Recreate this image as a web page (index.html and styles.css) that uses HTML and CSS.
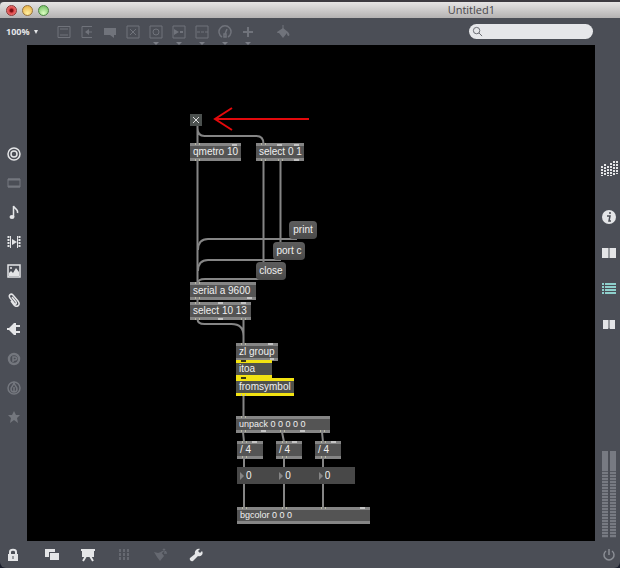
FILE: index.html
```html
<!DOCTYPE html>
<html lang="en">
<head>
<meta charset="utf-8">
<title>Untitled1</title>
<link rel="stylesheet" href="styles.css">
</head>
<body>
<div class="window">
  <header class="titlebar">
    <div class="lights">
      <button class="light close-light" aria-label="Close"></button>
      <button class="light min-light" aria-label="Minimize"></button>
      <button class="light zoom-light" aria-label="Zoom"></button>
    </div>
    <h1 class="title">Untitled1</h1>
  </header>

  <nav class="toolbar">
    <button class="zoom-level">100% <span class="caret"></span></button>
    <div class="tools">
      <button class="tool" aria-label="Object"><svg viewBox="0 0 14 14"><path d="M1 1.500h12v11H1zM3 4h8M3 10h8"/></svg></button>
      <button class="tool" aria-label="Message"><svg viewBox="0 0 14 14"><path d="M12 1.500H2v11h10M6 7h6"/><path class="solid" d="M5 7l4-3v6z"/></svg></button>
      <button class="tool" aria-label="Comment"><svg viewBox="0 0 14 14"><path class="solid" d="M1 3h12v7h-2v3l-4-3H1z"/></svg></button>
      <button class="tool" aria-label="Toggle"><svg viewBox="0 0 14 14"><path d="M1 1h12v12H1zM4 4l6 6M10 4l-6 6"/></svg></button>
      <button class="tool more" aria-label="Button"><svg viewBox="0 0 14 14"><path d="M1 1h12v12H1z"/><circle cx="7" cy="7" r="3"/></svg></button>
      <button class="tool more" aria-label="Number"><svg viewBox="0 0 14 14"><path d="M1 1h12v12H1z"/><path class="solid" d="M2 4l5 3-5 3zM8 6h3v2H8z"/></svg></button>
      <button class="tool more" aria-label="Slider"><svg viewBox="0 0 14 14"><path d="M1 1h12v12H1zM2 7h3M6 7h3M10 7h3"/></svg></button>
      <button class="tool more" aria-label="Dial"><svg viewBox="0 0 14 14"><path d="M4 12a6 6 0 1 1 6 0M7 9l2-5M6 9h2v3H6z" stroke-width="1.500"/></svg></button>
      <button class="tool more" aria-label="Add"><svg viewBox="0 0 14 14"><path d="M7 2v10M2 7h10" stroke-width="2"/></svg></button>
    </div>
    <button class="tool fill" aria-label="Fill color"><svg viewBox="0 0 14 14"><path class="solid" d="M1 7l6-4 5 4c1 1 2 3 1 4-2 0-2-2-2-3l-4 5-4-5c-1 0-2 0-2-1z"/><path d="M7 0v4"/></svg></button>
    <label class="search">
      <svg viewBox="0 0 12 12"><circle cx="5" cy="5" r="3.500"/><path d="M7.500 7.500L11 11"/></svg>
      <input type="search" aria-label="Search">
    </label>
  </nav>

  <main class="workspace">
    <aside class="rail left">
      <button class="icon" aria-label="Target"><svg viewBox="0 0 14 14"><circle cx="7" cy="7" r="6" stroke-width="1.500"/><circle cx="7" cy="7" r="3" stroke-width="1.500"/></svg></button>
      <button class="icon dim" aria-label="Object box"><svg viewBox="0 0 14 14"><path d="M1 3h12v8H1z"/><path d="M1 3.500h12M1 10.500h12" stroke-width="2"/></svg></button>
      <button class="icon" aria-label="Audio"><svg viewBox="0 0 14 14"><path d="M6.500 12V1c1 3 5 3 4 7" stroke-width="1.500"/><ellipse class="solid" cx="5" cy="12" rx="2.500" ry="2"/></svg></button>
      <button class="icon" aria-label="Video"><svg viewBox="0 0 14 14"><path d="M1.500 1v12M12.500 1v12" stroke-width="2" stroke-dasharray="2 1"/><path d="M3.500 1v12M10.500 1v12"/><path class="solid" d="M5 4l5 3-5 3z"/></svg></button>
      <button class="icon" aria-label="Images"><svg viewBox="0 0 14 14"><path d="M1 1h12v12H1z" stroke-width="1.500"/><path class="solid" d="M2 12V9l2-2 2 2 3-5 3 4v4z"/><circle class="solid" cx="4" cy="4" r="1"/></svg></button>
      <button class="icon" aria-label="Clippings"><svg viewBox="0 0 14 14"><path d="M5 4l4 5c1 2-1 3-2 1L3 5C1 2 4 0 6 2l5 6c3 4-1 7-4 4L4 8" stroke-width="1.500"/></svg></button>
      <button class="icon" aria-label="Plug-ins"><svg viewBox="0 0 14 14"><path class="solid" d="M0 6h2l5-5h2v2h4v2H9v4h4v2H9v2H7L2 8H0z"/></svg></button>
      <button class="icon dim" aria-label="Packages"><svg viewBox="0 0 14 14"><circle cx="7" cy="7" r="5" stroke-width="2.500"/><path d="M6 10V5h2c2 0 2 3 0 3H6" stroke-width="1.500"/></svg></button>
      <button class="icon dim" aria-label="Live"><svg viewBox="0 0 14 14"><circle cx="7" cy="7" r="6" stroke-width="1.500"/><path d="M7 2c-1 3-3 4-3 6 0 4 6 4 6 0 0-2-2-3-3-6zM7 6v5" stroke-width="1.500"/></svg></button>
      <button class="icon dim" aria-label="Favorites"><svg viewBox="0 0 14 14"><path class="solid" d="M7 1l2 4h4l-3 3 1 5-4-3-4 3 1-5-3-3h4z"/></svg></button>
    </aside>

    <section class="canvas" aria-label="Patcher">
      <svg class="wires" viewBox="27 45 568 496">
        <path d="M197.500 126v17M197.500 128q0 8 7 8h52q7 0 7 8M197.500 161v121M263.500 161v102M280.500 161v81"/>
        <path d="M297 239H208q-10 0-10 11M281 260H208q-10 0-10 11M264 279h-59q-7 0-7 4"/>
        <path d="M197.500 299v4M197.500 319q0 5 7 5h27q12 0 12 12M243.500 319v25M243.500 395v22"/>
        <path d="M243 432l1 10M282 432l2 10M322 432l1 10M244 458v9M284 458v9M323 458v9M244 484v24M284 484v24M323 484v24"/>
        <path class="pointer" d="M309 119H215M232 108l-17 11 17 11"/>
      </svg>

      <input class="node toggle" type="checkbox" checked aria-label="Toggle">
      <div class="node object qmetro">qmetro 10</div>
      <div class="node object select-a">select 0 1</div>
      <button class="node message print">print</button>
      <button class="node message port">port c</button>
      <button class="node message close">close</button>
      <div class="node object serial">serial a 9600</div>
      <div class="node object select-b">select 10 13</div>
      <div class="node object zl">zl group</div>
      <div class="node object signal itoa">itoa</div>
      <div class="node object signal fromsymbol">fromsymbol</div>
      <div class="node object small unpack">unpack 0 0 0 0 0</div>
      <div class="node object div-a">/ 4</div>
      <div class="node object div-b">/ 4</div>
      <div class="node object div-c">/ 4</div>
      <div class="node numbers">
        <label><span class="marker"></span><input type="text" value="0" aria-label="Red"></label>
        <label><span class="marker"></span><input type="text" value="0" aria-label="Green"></label>
        <label><span class="marker"></span><input type="text" value="0" aria-label="Blue"></label>
      </div>
      <div class="node object small bgcolor">bgcolor 0 0 0</div>

      <svg class="ports" viewBox="27 45 568 496">
        <path class="joined" d="M195 144h5M195 160h5M261 144h5M261 160h5M278 160h5M195 283h5M195 298h5M195 303h5M195 319h5M241 319h5M241 344h5M241 395h5M241 417h5M241 431h5M280 431h5M320 431h5M242 442h5M282 442h5M321 442h5M242 457h5M282 457h5M321 457h5M242 508h5M282 508h5M321 508h5"/>
        <path class="free" d="M232 145h5M277 145h5M294 145h5M294 160h5M247 298h5M218 303h5M241 303h5M218 319h5M268 344h5M270 359h4M261 431h5M300 431h5M252 442h5M292 442h5M331 442h5M360 508h5"/>
        <path class="dark" d="M241 361h5M241 378h5"/>
      </svg>
    </section>

    <aside class="rail right">
      <div class="views">
        <button class="icon large" aria-label="Snapshots"><svg viewBox="0 0 18 18"><path d="M2 6v10M5 4v12M8 6v10M11 3v13M14 1v15M17 1v13" stroke-width="2" stroke-dasharray="2 1"/></svg></button>
        <button class="icon" aria-label="Inspector"><svg viewBox="0 0 14 14"><circle class="solid" cx="7" cy="7" r="7"/><path class="cut" d="M5 6h3l-1 5h2M8 2v2" stroke-width="1.500"/></svg></button>
        <button class="icon" aria-label="Reference"><svg viewBox="0 0 14 14"><path class="solid" d="M0 2h6l1 1 1-1h6v10H8l-1-1-1 1H0z"/><path class="cut" d="M7 3v8"/></svg></button>
        <button class="icon active" aria-label="Console"><svg viewBox="0 0 14 14"><path d="M0 2h2M3 2h11M0 5h2M3 5h11M0 8h2M3 8h11M0 11h2M3 11h11" stroke-width="2"/></svg></button>
        <button class="icon" aria-label="Lessons"><svg viewBox="0 0 14 14"><path class="solid" d="M1 2h5l1 1 1-1h5v9H8l-1-1-1 1H1z"/><path class="cut" d="M7 3v8"/></svg></button>
      </div>
      <div class="meters"><span class="meter"></span><span class="meter"></span></div>
    </aside>
  </main>

  <footer class="bottombar">
    <button class="icon lock" aria-label="Lock"><svg viewBox="0 0 14 14"><path class="solid" d="M2 6h10v7H2z"/><path d="M4 7V4c0-3 6-3 6 0v3" stroke-width="2"/><path class="cut" d="M7 8v3"/></svg></button>
    <div class="actions">
      <button class="icon" aria-label="New view"><svg viewBox="0 0 14 14"><path class="solid" d="M0 1h10v3H4v5H0zM5 5h9v7H5z"/></svg></button>
      <button class="icon" aria-label="Presentation"><svg viewBox="0 0 14 14"><path class="solid" d="M0 1h14v2h-1v6H1V3H0z"/><path d="M5 8l-3 5M9 8l3 5" stroke-width="2"/></svg></button>
      <button class="icon faint" aria-label="Grid"><svg viewBox="0 0 14 14"><path d="M3 1v12M7 1v12M11 1v12" stroke-width="2" stroke-dasharray="3 1"/></svg></button>
      <button class="icon faint" aria-label="Clear"><svg viewBox="0 0 14 14"><path class="solid" d="M1 4l4 1 3-1 3 4-4 5-3-4z"/><path d="M8 5l4-4M11 5h3M10 1l3 3" stroke-width="1.500"/></svg></button>
      <button class="icon" aria-label="Tools"><svg viewBox="0 0 14 14"><path class="solid" d="M1 10l5-4c-1-3 2-6 5-5L9 3l2 2 2-2c2 3-1 6-4 5l-5 5c-2 1-4-1-3-3z"/></svg></button>
    </div>
    <button class="icon power" aria-label="Audio power"><svg viewBox="0 0 14 14"><path d="M4 3a5 5 0 1 0 6 0M7 1v6" stroke-width="1.500"/></svg></button>
  </footer>
</div>
</body>
</html>
```
FILE: styles.css
```css
* { box-sizing: border-box; }

body {
  margin: 0;
  background: #1b1f2c;
  font-family: "Liberation Sans", Arial, sans-serif;
}

button {
  margin: 0;
  padding: 0;
  border: 0;
  background: none;
  color: inherit;
  font: inherit;
}

svg {
  display: block;
  fill: none;
  stroke: currentColor;
}

.solid { fill: currentColor; stroke: none; }
.cut { stroke: #4b4e56; }

.window {
  display: flex;
  flex-direction: column;
  min-height: 100vh;
  border-top: 2px solid #3d3a40;
  border-radius: 0 0 6px 6px;
  background: #4b4e56;
  color: #e4e5e7;
}

/* Title bar */
.titlebar {
  display: flex;
  align-items: center;
  justify-content: space-between;
  height: 16px;
  padding: 0 125px 0 6px;
  border-radius: 4px 0 0 0;
  background: linear-gradient(#e6e4e4, #b4b2b2);
}

.lights { display: flex; gap: 5px; }

.light {
  width: 11px;
  height: 11px;
  border: 1px solid;
  border-radius: 50%;
}

.close-light { border-color: #8d3433; background: radial-gradient(circle, #7d0c12 20%, #e0484a 40%, #ef9a94); }
.min-light { border-color: #99733a; background: radial-gradient(circle at 50% 80%, #fff0a0, #e5a83c); }
.zoom-light { border-color: #4d8445; background: radial-gradient(circle at 50% 80%, #dcffc2, #67b658); }

.title {
  margin: 0;
  color: #48474a;
  font: 11px/16px "Open Sans", sans-serif;
}

/* Toolbar */
.toolbar {
  display: flex;
  align-items: center;
  height: 27px;
  padding: 0 27px 0 6px;
}

.zoom-level {
  display: flex;
  align-items: center;
  gap: 4px;
  width: 46px;
  font: bold 9px/12px "Open Sans", sans-serif;
}

.caret {
  border: 2px solid transparent;
  border-top: 4px solid #e4e5e7;
  border-bottom: 0;
}

.tools { display: flex; }

.tool {
  position: relative;
  display: grid;
  place-items: center;
  width: 23px;
  height: 26px;
  color: #70737b;
}

.tool svg { width: 14px; height: 14px; }

.more::after {
  content: "";
  position: absolute;
  bottom: 0;
  left: 9px;
  border: 3px solid transparent;
  border-top-color: #7c7f87;
  border-bottom: 0;
}

.fill { margin-left: 12px; }

.search {
  display: flex;
  align-items: center;
  gap: 4px;
  width: 124px;
  height: 15px;
  margin-left: auto;
  padding: 0 6px 0 3px;
  border-radius: 8px;
  background: #e6e7ea;
  color: #606369;
}

.search svg { flex: none; width: 11px; height: 11px; }

.search input {
  width: 100%;
  height: 12px;
  padding: 0;
  border: 0;
  outline: 0;
  background: none;
  font-size: 10px;
}

/* Workspace */
.workspace {
  flex: 1;
  display: grid;
  grid-template-columns: 27px 1fr 25px;
}

.rail { display: flex; flex-direction: column; align-items: center; }

.left { justify-content: space-between; padding: 102px 0 117px; }

.right { justify-content: space-between; padding: 115px 0 3px 2px; }

.icon { display: block; width: 14px; height: 14px; }
.icon svg { width: 100%; height: 100%; }
.dim { color: #74777e; }
.faint { color: #666971; }
.active { color: #8ed0cc; }
.large { width: 18px; height: 18px; margin-bottom: 10px; }

.views {
  display: flex;
  flex-direction: column;
  align-items: center;
  gap: 22px;
}

.meters { display: flex; gap: 2px; }

.meter {
  width: 6px;
  height: 87px;
  background:
    repeating-linear-gradient(transparent 0 2px, #555860 2px 3px) 0 18px no-repeat,
    #777a82;
}

/* Patcher */
.canvas {
  position: relative;
  overflow: hidden;
  background: #000;
}

.wires, .ports {
  position: absolute;
  top: 0;
  left: 0;
  width: 568px;
  height: 496px;
  pointer-events: none;
}

.wires { stroke: #858585; stroke-width: 2; }
.pointer { stroke: #e3090c; }
.ports { stroke-width: 2; }
.joined { stroke: #b8b8a4; stroke-dasharray: 1 3 1; }
.free { stroke: #c4c4c4; }
.dark { stroke: #3a3810; }

.node { position: absolute; }

.object {
  height: 18px;
  padding-left: 3px;
  border: solid #858585;
  border-width: 3px 0;
  background: #545454;
  color: #f0f0f0;
  font-size: 10px;
  line-height: 12px;
  white-space: nowrap;
}

.small { height: 17px; font-size: 9px; line-height: 11px; }
.signal { border-color: #f2e312; background: #50524c; }

.message {
  height: 18px;
  border-radius: 4px;
  background: linear-gradient(#5d5d5d, #4a4a4a);
  color: #f0f0f0;
  font-size: 10px;
  line-height: 18px;
}

.toggle {
  appearance: none;
  top: 69px;
  left: 163px;
  width: 12px;
  height: 12px;
  margin: 0;
  background:
    linear-gradient(45deg, transparent 42%, #ddd 42% 58%, transparent 58%) center / 6px 6px no-repeat,
    linear-gradient(-45deg, transparent 42%, #ddd 42% 58%, transparent 58%) center / 6px 6px no-repeat,
    #4b504e;
}

.qmetro { top: 98px; left: 163px; width: 51px; }
.select-a { top: 98px; left: 229px; width: 48px; }
.print { top: 176px; left: 262px; width: 28px; }
.port { top: 197px; left: 246px; width: 32px; }
.close { top: 217px; left: 229px; width: 30px; }
.serial { top: 237px; left: 163px; width: 66px; }
.select-b { top: 257px; left: 163px; width: 61px; }
.zl { top: 298px; left: 209px; width: 42px; }
.itoa { top: 315px; left: 209px; width: 36px; }
.fromsymbol { top: 333px; left: 209px; width: 58px; }
.unpack { top: 371px; left: 209px; width: 94px; }
.div-a { top: 396px; left: 210px; width: 26px; }
.div-b { top: 396px; left: 249px; width: 26px; }
.div-c { top: 396px; left: 288px; width: 26px; }
.bgcolor { top: 462px; left: 210px; width: 133px; }

.numbers {
  top: 422px;
  left: 210px;
  display: grid;
  grid-template-columns: 1fr 1fr 1fr;
  width: 118px;
  height: 17px;
  background: #484848;
}

.numbers label {
  display: flex;
  align-items: center;
  gap: 2px;
  padding-left: 3px;
}

.marker {
  border: 4px solid transparent;
  border-left-color: #858585;
  border-right: 0;
}

.numbers input {
  width: 20px;
  padding: 0;
  border: 0;
  background: none;
  color: #f0f0f0;
  font: 10px/12px "Liberation Sans", Arial, sans-serif;
}

/* Bottom bar */
.bottombar {
  display: flex;
  align-items: center;
  height: 27px;
  padding: 0 4px 0 6px;
}

.actions { display: flex; gap: 22px; margin-left: 25px; }
.power { margin-left: auto; color: #8a8d94; }
```
